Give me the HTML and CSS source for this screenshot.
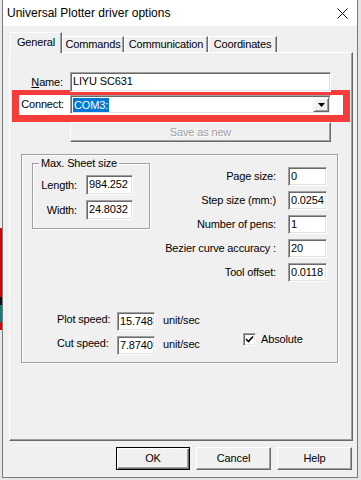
FILE: index.html
```html
<!DOCTYPE html>
<html lang="en">
<head>
    <meta charset="UTF-8">
    <title>Universal Plotter driver options</title>
    <link rel="stylesheet" href="styles.css">
</head>
<body>
    <div class="screen">
        <div class="edge-left">
            <div class="bg-light"></div>
            <div class="bg-red"></div>
            <div class="bg-black"></div>
            <div class="bg-teal"></div>
            <div class="bg-red short"></div>
        </div>

        <div class="window">
            <div class="titlebar">
                <span class="title">Universal Plotter driver options</span>
                <svg class="close" width="11" height="11" viewBox="0 0 11 11">
                    <path d="M0.5 0.5 L10.5 10.5 M10.5 0.5 L0.5 10.5" stroke="#111" stroke-width="1" fill="none"/>
                </svg>
            </div>

            <div class="client">
                <div class="tabs">
                    <div class="tab active">General</div>
                    <div class="tab w-commands">Commands</div>
                    <div class="tab w-comm">Communication</div>
                    <div class="tab w-coord">Coordinates</div>
                </div>

                <div class="panel">
                    <div class="name-row">
                        <label class="lbl name-lbl"><u>N</u>ame:</label>
                        <div class="field wide">LIYU SC631</div>
                    </div>

                    <div class="highlight">
                        <label class="lbl connect-lbl">Connect:</label>
                        <div class="combo">
                            <span class="selected">COM3:</span>
                            <span class="drop">
                                <svg width="7" height="4" viewBox="0 0 7 4"><path d="M0 0 H7 L3.5 4 Z" fill="#000"/></svg>
                            </span>
                        </div>
                    </div>

                    <div class="btn save">Save as new</div>

                    <div class="group big">
                        <div class="top">
                            <div class="group sheet">
                                <span class="legend">Max. Sheet size</span>
                                <div class="sheet-row">
                                    <label class="lbl sheet-lbl">Length:</label>
                                    <div class="field sheet-field">984.252</div>
                                </div>
                                <div class="sheet-row">
                                    <label class="lbl sheet-lbl">Width:</label>
                                    <div class="field sheet-field">24.8032</div>
                                </div>
                            </div>

                            <div class="params">
                                <div class="param"><label class="lbl">Page size:</label><div class="field small">0</div></div>
                                <div class="param"><label class="lbl">Step size (mm:)</label><div class="field small">0.0254</div></div>
                                <div class="param"><label class="lbl">Number of pens:</label><div class="field small">1</div></div>
                                <div class="param"><label class="lbl">Bezier curve accuracy :</label><div class="field small">20</div></div>
                                <div class="param"><label class="lbl">Tool offset:</label><div class="field small">0.0118</div></div>
                            </div>
                        </div>

                        <div class="speeds">
                            <div class="speed-row">
                                <label class="speed-lbl">Plot speed:</label>
                                <div class="field speed">15.748</div>
                                <span class="unit">unit/sec</span>
                            </div>
                            <div class="speed-row second">
                                <label class="speed-lbl">Cut speed:</label>
                                <div class="field speed">7.8740</div>
                                <span class="unit">unit/sec</span>
                                <div class="check">
                                    <span class="box">
                                        <svg width="9" height="9" viewBox="0 0 9 9"><path d="M1 4 L3.5 6.5 L8 1.5" stroke="#000" stroke-width="1.6" fill="none"/></svg>
                                    </span>
                                    <span class="check-lbl">Absolute</span>
                                </div>
                            </div>
                        </div>
                    </div>
                </div>

                <div class="buttons">
                    <div class="btn dialog default">OK</div>
                    <div class="btn dialog">Cancel</div>
                    <div class="btn dialog">Help</div>
                </div>
            </div>
        </div>

        <div class="edge-right"></div>
    </div>
</body>
</html>
```

FILE: styles.css
```css
:root {
    --face: #f0f0f0;
    --shadow: #a0a0a0;
    --dark: #696969;
    --light: #e3e3e3;
    --mark: #f73c3c;
}
* {
    box-sizing: border-box;
}
body {
    margin: 0;
    background: #e6e6e6;
    font-family: 'Liberation Sans', Arial, sans-serif;
    font-size: 11px;
    letter-spacing: -0.15px;
    color: #000;
}
.screen {
    display: flex;
    width: 361px;
    height: 480px;
    overflow: hidden;
}
.edge-left {
    width: 2px;
    display: flex;
    flex-direction: column;
}
.bg-light {
    height: 228px;
    background: #e9e9e9;
}
.bg-red {
    height: 69px;
    background: #e00000;
}
.bg-red.short {
    height: 8px;
}
.bg-black {
    height: 8px;
    background: #111;
}
.bg-teal {
    height: 17px;
    background: #0d7f7f;
}
.edge-right {
    width: 3px;
    background: #e4e4e4;
}
.window {
    width: 356px;
    height: 478px;
    border: 1px solid #7a7a7a;
    border-top: 0;
    background: var(--face);
}
.titlebar {
    height: 26px;
    background: #fff;
    display: flex;
    align-items: center;
    justify-content: space-between;
    padding: 0 9px 0 4px;
}
.title {
    font-size: 12px;
    letter-spacing: 0;
}
.client {
    height: 451px;
}
.tabs {
    display: flex;
    align-items: flex-end;
    height: 26px;
    padding-left: 7px;
}
.tab {
    height: 16px;
    line-height: 15px;
    text-align: center;
    border-top: 1px solid #fff;
    border-left: 1px solid #fff;
    border-right: 1px solid var(--dark);
    box-shadow: inset -1px 0 var(--shadow);
}
.tab.active {
    position: relative;
    width: 52px;
    height: 21px;
    line-height: 18px;
    margin-bottom: -1px;
    background: var(--face);
}
.w-commands { width: 62px; }
.w-comm { width: 84px; }
.w-coord { width: 69px; }
.panel {
    margin-left: 6px;
    width: 344px;
    height: 389px;
    border: 1px solid;
    border-color: #fff var(--dark) var(--dark) #fff;
    box-shadow: inset -1px -1px var(--shadow);
}
.lbl {
    line-height: 20px;
    text-align: right;
    white-space: nowrap;
}
.field {
    height: 20px;
    line-height: 17px;
    padding-left: 2px;
    background: #fff;
    border: 1px solid;
    border-color: var(--shadow) #fff #fff var(--shadow);
    box-shadow: inset 1px 1px var(--dark), inset -1px -1px var(--light);
    white-space: nowrap;
    overflow: hidden;
}
.name-row {
    display: flex;
    margin-top: 19px;
}
.name-lbl {
    width: 53px;
}
.wide {
    margin-left: 7px;
    width: 261px;
}
.highlight {
    display: flex;
    margin: -2px 0 0 2px;
    width: 338px;
    height: 32px;
    border-style: solid;
    border-color: var(--mark);
    border-width: 5px 7px 7px 7px;
    background: #fff;
}
.connect-lbl {
    width: 45px;
    line-height: 19px;
}
.combo {
    display: flex;
    align-items: center;
    justify-content: space-between;
    margin-left: 6px;
    width: 261px;
    height: 19px;
    padding: 0 1px 0 2px;
    background: #fff;
    border: 1px solid;
    border-color: var(--shadow) #fff #fff var(--shadow);
    box-shadow: inset 1px 1px var(--dark), inset -1px -1px var(--light);
}
.selected {
    background: #0078d7;
    color: #fff;
    line-height: 14px;
    padding: 0 1px;
}
.drop {
    display: flex;
    align-items: center;
    justify-content: center;
    width: 16px;
    height: 15px;
    background: var(--face);
    border: 1px solid;
    border-color: var(--face) var(--dark) var(--dark) var(--face);
    box-shadow: inset 1px 1px #fff, inset -1px -1px var(--shadow);
}
.btn {
    text-align: center;
    background: var(--face);
    border: 1px solid;
    border-color: #fff var(--dark) var(--dark) #fff;
    box-shadow: inset -1px -1px var(--shadow);
}
.save {
    margin-left: 60px;
    width: 261px;
    height: 20px;
    line-height: 18px;
    color: var(--shadow);
    text-shadow: 1px 1px #fff;
}
.group {
    border: 1px solid var(--shadow);
    box-shadow: inset 1px 1px #fff, 1px 1px #fff;
}
.big {
    margin: 12px 0 0 11px;
    width: 317px;
    height: 209px;
}
.top {
    display: flex;
    align-items: flex-start;
}
.sheet {
    margin: 8px 0 0 10px;
    width: 118px;
    height: 66px;
}
.legend {
    display: block;
    width: fit-content;
    margin: -7px 0 0 6px;
    padding: 0 2px;
    line-height: 13px;
    background: var(--face);
}
.sheet-row {
    display: flex;
    margin-top: 5px;
}
.sheet-lbl {
    width: 44px;
}
.sheet-field {
    margin-left: 9px;
    width: 47px;
}
.params {
    display: flex;
    flex-direction: column;
    gap: 5px;
    margin: 12px 10px 0 auto;
}
.param {
    display: flex;
    justify-content: flex-end;
}
.param .lbl {
    line-height: 19px;
    margin-right: 12px;
}
.small {
    width: 39px;
    height: 19px;
    line-height: 16px;
}
.speeds {
    margin: 30px 0 0 35px;
}
.speed-row {
    display: flex;
    align-items: flex-start;
}
.speed-row.second {
    margin-top: 5px;
}
.speed-lbl {
    width: 60px;
    line-height: 15px;
}
.speed {
    width: 38px;
    height: 19px;
    line-height: 16px;
}
.unit {
    margin-left: 8px;
    width: 80px;
    line-height: 17px;
}
.check {
    display: flex;
    align-items: center;
    margin-top: -3px;
}
.box {
    display: flex;
    align-items: center;
    justify-content: center;
    width: 13px;
    height: 13px;
    background: #fff;
    border: 1px solid;
    border-color: var(--shadow) #fff #fff var(--shadow);
    box-shadow: inset 1px 1px var(--dark), inset -1px -1px var(--light);
}
.check-lbl {
    margin-left: 5px;
    line-height: 13px;
}
.buttons {
    display: flex;
    justify-content: flex-end;
    gap: 6px;
    margin: 6px 5px 0 0;
}
.dialog {
    width: 75px;
    height: 23px;
    line-height: 20px;
}
.dialog.default {
    width: 74px;
    border-color: #000;
    box-shadow: inset 1px 1px #fff, inset -1px -1px var(--dark), inset -2px -2px var(--shadow);
}
```
